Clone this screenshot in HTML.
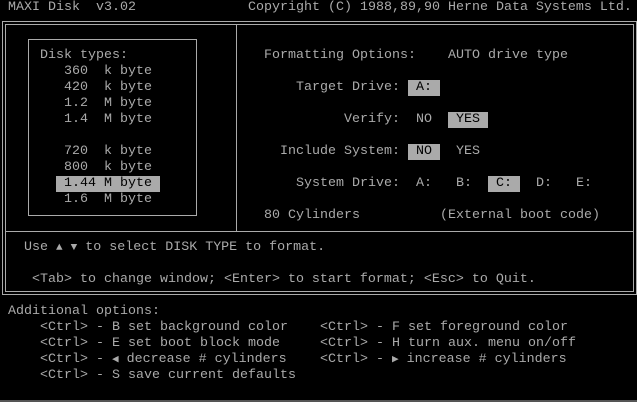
<!DOCTYPE html>
<html><head><meta charset="utf-8"><style>
html,body{margin:0;padding:0;background:#000;}
body{width:637px;height:402px;position:relative;overflow:hidden;font-family:"Liberation Mono","DejaVu Sans Mono",monospace;font-size:13.33px;color:#aaa;}
.t{position:absolute;white-space:pre;line-height:16px;height:16px;}
.h{background:#aaa;color:#000;}
.b{position:absolute;border:1px solid #aaa;box-sizing:border-box;}
.l{position:absolute;background:#aaa;}
.s{font-size:11px;}
</style></head><body>
<div class="b" style="left:2px;top:21px;width:635px;height:274px;"></div>
<div class="b" style="left:5px;top:24px;width:629px;height:268px;"></div>
<div class="l" style="left:236px;top:24px;width:1px;height:207px;"></div>
<div class="l" style="left:5px;top:231px;width:629px;height:1px;"></div>
<div class="b" style="left:28px;top:39px;width:169px;height:177px;"></div>

<div class="t" style="left:8px;top:0px">MAXI Disk  v3.02</div>
<div class="t" style="left:248px;top:0px">Copyright (C) 1988,89,90 Herne Data Systems Ltd.</div>

<div class="t" style="left:40px;top:48px">Disk types:</div>
<div class="t" style="left:64px;top:64px">360  k byte</div>
<div class="t" style="left:64px;top:80px">420  k byte</div>
<div class="t" style="left:64px;top:96px">1.2  M byte</div>
<div class="t" style="left:64px;top:112px">1.4  M byte</div>
<div class="t" style="left:64px;top:144px">720  k byte</div>
<div class="t" style="left:64px;top:160px">800  k byte</div>
<div class="t h" style="left:56px;top:176px;width:104px"> 1.44 M byte </div>
<div class="t" style="left:64px;top:192px">1.6  M byte</div>

<div class="t" style="left:264px;top:48px">Formatting Options:</div>
<div class="t" style="left:448px;top:48px">AUTO drive type</div>
<div class="t" style="left:296px;top:80px">Target Drive:</div>
<div class="t h" style="left:408px;top:80px;width:32px"> A: </div>
<div class="t" style="left:344px;top:112px">Verify:</div>
<div class="t" style="left:416px;top:112px">NO</div>
<div class="t h" style="left:448px;top:112px;width:40px"> YES </div>
<div class="t" style="left:280px;top:144px">Include System:</div>
<div class="t h" style="left:408px;top:144px;width:32px"> NO </div>
<div class="t" style="left:456px;top:144px">YES</div>
<div class="t" style="left:296px;top:176px">System Drive:</div>
<div class="t" style="left:416px;top:176px">A:</div>
<div class="t" style="left:456px;top:176px">B:</div>
<div class="t h" style="left:488px;top:176px;width:32px"> C: </div>
<div class="t" style="left:536px;top:176px">D:</div>
<div class="t" style="left:576px;top:176px">E:</div>
<div class="t" style="left:264px;top:208px">80 Cylinders</div>
<div class="t" style="left:440px;top:208px">(External boot code)</div>

<div class="t" style="left:24px;top:240px">Use <span class="s">▲</span> <span class="s">▼</span> to select DISK TYPE to format.</div>
<div class="t" style="left:32px;top:272px">&lt;Tab&gt; to change window; &lt;Enter&gt; to start format; &lt;Esc&gt; to Quit.</div>

<div class="t" style="left:8px;top:304px">Additional options:</div>
<div class="t" style="left:40px;top:320px">&lt;Ctrl&gt; - B set background color</div>
<div class="t" style="left:320px;top:320px">&lt;Ctrl&gt; - F set foreground color</div>
<div class="t" style="left:40px;top:336px">&lt;Ctrl&gt; - E set boot block mode</div>
<div class="t" style="left:320px;top:336px">&lt;Ctrl&gt; - H turn aux. menu on/off</div>
<div class="t" style="left:40px;top:352px">&lt;Ctrl&gt; - <span class="s">◀</span> decrease # cylinders</div>
<div class="t" style="left:320px;top:352px">&lt;Ctrl&gt; - <span class="s">▶</span> increase # cylinders</div>
<div class="t" style="left:40px;top:368px">&lt;Ctrl&gt; - S save current defaults</div>
<div class="l" style="left:0;top:400px;width:637px;height:2px;background:#555"></div>
</body></html>
